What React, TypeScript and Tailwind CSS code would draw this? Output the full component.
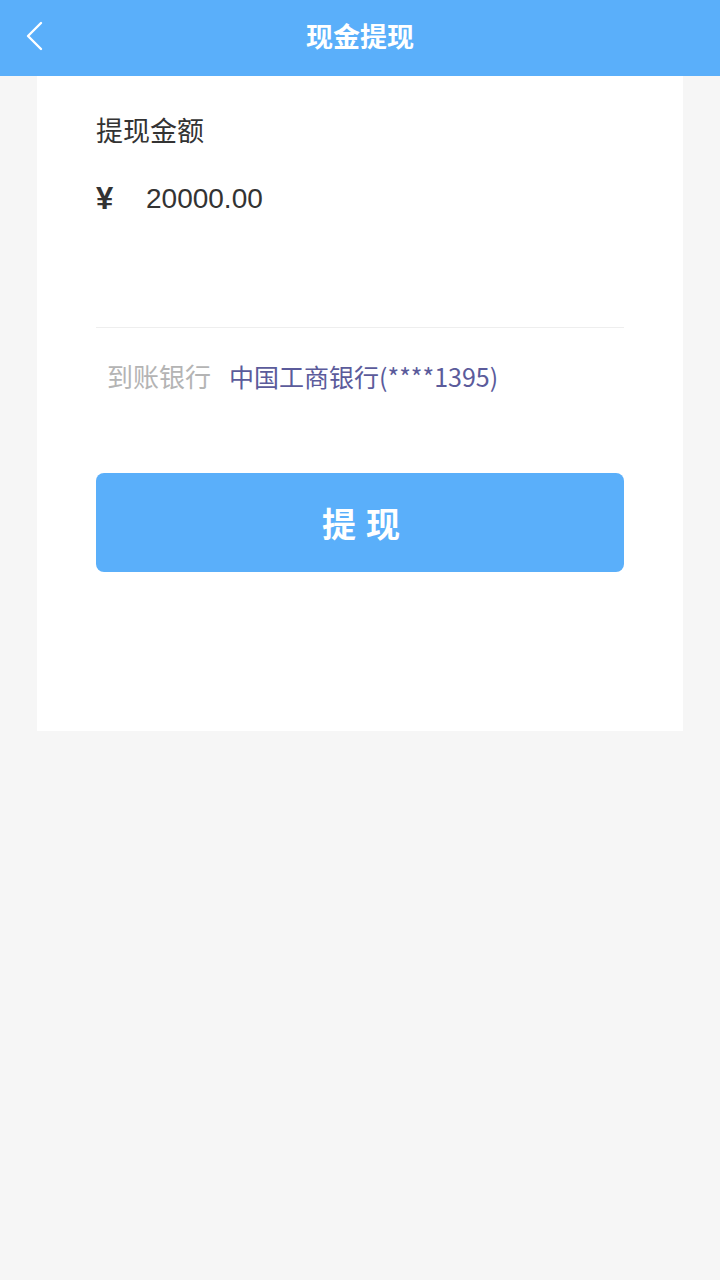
import React from "react";

const font = { fontFamily: '"Noto Sans CJK SC", "Liberation Sans", sans-serif' };

export default function App() {
  return (
    <div className="min-h-[1280px] w-[720px] bg-[#f6f6f6]" style={font}>
      {/* header */}
      <header className="relative flex h-[76px] items-center justify-center bg-[#5aaffa] pb-[3px]">
        <button className="absolute left-[22px] top-[20px] flex h-[32px] w-[24px] items-center justify-center">
          <svg width="20" height="30" viewBox="0 0 20 30" fill="none">
            <path d="M17 2 L4 15 L17 28" stroke="#fff" strokeWidth="2.4" strokeLinecap="round" strokeLinejoin="round" />
          </svg>
        </button>
        <h1 className="text-[27px] font-bold text-white">现金提现</h1>
      </header>

      {/* card */}
      <div className="mx-[37px] h-[655px] bg-white px-[59px] pt-[30px]">
        <div className="text-[27px] leading-[48px] text-[#333]">提现金额</div>
        <div className="mt-[22px] flex items-center" style={{ fontFamily: '"Liberation Sans", sans-serif' }}>
          <span className="w-[50px] text-[31px] font-bold text-[#333]">¥</span>
          <span className="text-[28px] text-[#333]">20000.00</span>
        </div>
        <div className="mt-[104px] border-t border-[#eeeeee]" />
        <div className="mt-[26px] flex items-center pl-[11px] leading-[44px]">
          <span className="text-[26px] text-[#b4b4b4]">到账银行</span>
          <span className="ml-[18px] text-[25px] text-[#5b5b9b]">中国工商银行(****1395)</span>
        </div>
        <button className="mt-[75px] flex h-[99px] w-full items-center justify-center rounded-[8px] bg-[#5aaffa] pl-[12px] text-[34px] font-bold tracking-[10px] text-white">
          提现
        </button>
      </div>
    </div>
  );
}
